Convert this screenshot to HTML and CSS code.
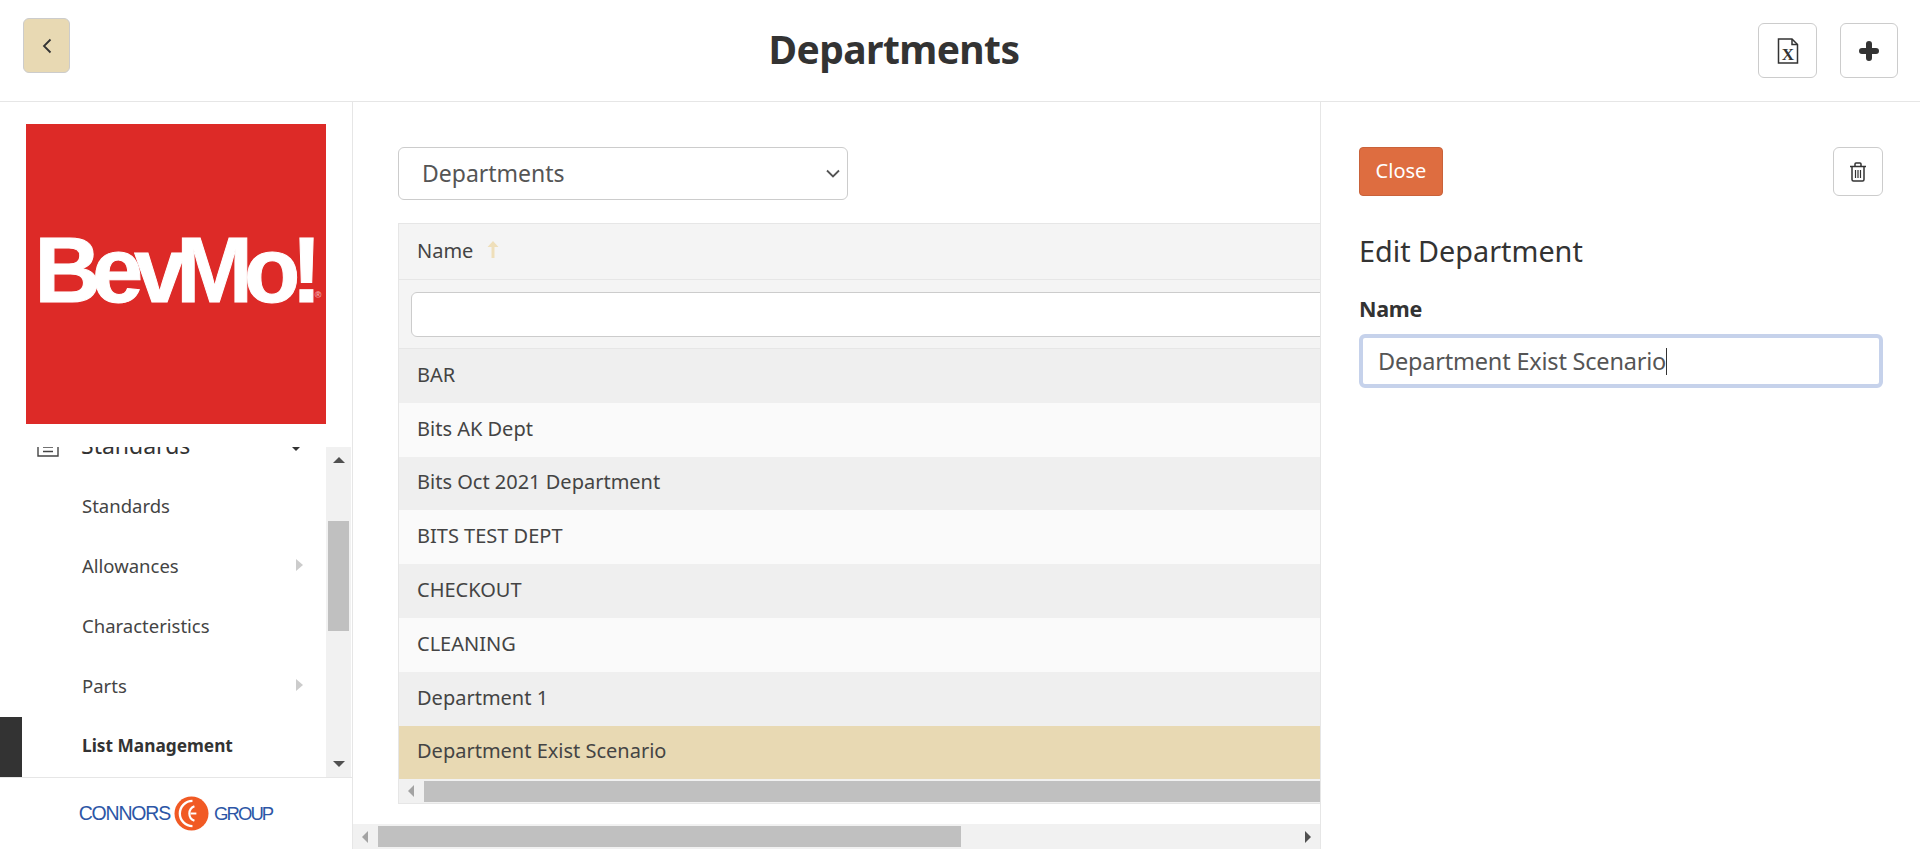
FILE: index.html
```html
<!DOCTYPE html>
<html lang="en">
<head>
    <meta charset="UTF-8">
    <title>Departments</title>
    <link rel="stylesheet" href="styles.css">
</head>
<body>
    <header class="topbar">
        <button class="back-btn" type="button" aria-label="Back">
            <svg width="14" height="16" viewBox="0 0 14 16"><path d="M10.5 1.5 L4 8 L10.5 14.5" fill="none" stroke="#333" stroke-width="1.8"/></svg>
        </button>
        <h1 class="page-title">Departments</h1>
        <div class="top-actions">
            <button class="icon-btn icon-btn-excel" type="button" aria-label="Export">
                <svg width="22" height="26" viewBox="0 0 22 26">
                    <path d="M1.5 1 H15 L20.5 6.5 V25 H1.5 Z" fill="#fff" stroke="#333" stroke-width="1.5"/>
                    <path d="M15 1 V6.5 H20.5" fill="none" stroke="#333" stroke-width="1.5"/>
                    <text x="11" y="22" text-anchor="middle" class="excel-x">X</text>
                </svg>
            </button>
            <button class="icon-btn icon-btn-plus" type="button" aria-label="Add">
                <svg width="20" height="20" viewBox="0 0 20 20"><path d="M10 3 V17 M3 10 H17" stroke="#333" stroke-width="6" stroke-linecap="round"/></svg>
            </button>
        </div>
    </header>

    <div class="layout">
        <aside class="sidebar">
            <div class="brand-logo"><span class="brand-name">BevMo!</span><span class="brand-reg">®</span></div>
            <div class="nav-area">
                <nav class="nav-list">
                    <div class="nav-parent">
                        <svg class="nav-icon" width="22" height="18" viewBox="0 0 22 18"><path d="M1 0 V17 H21 V0 M6 8 H16 M6 12.5 H16" fill="none" stroke="#444" stroke-width="1.4"/></svg>
                        <span>Standards</span>
                        <i class="caret-down"></i>
                    </div>
                    <a class="nav-item">Standards</a>
                    <a class="nav-item">Allowances<i class="caret-right"></i></a>
                    <a class="nav-item">Characteristics</a>
                    <a class="nav-item">Parts<i class="caret-right"></i></a>
                    <a class="nav-item nav-item-active">List Management</a>
                </nav>
                <div class="vscroll">
                    <i class="arrow-up"></i>
                    <div class="vscroll-track"><div class="vscroll-thumb"></div></div>
                    <i class="arrow-down"></i>
                </div>
            </div>
            <div class="sidebar-foot">
                <span class="cg-word">CONNORS</span>
                <svg class="cg-mark" width="35" height="35" viewBox="0 0 36 36">
                    <circle cx="18" cy="18" r="17.5" fill="#f15a24"/>
                    <path d="M19 5 A13 13 0 0 0 19 31" fill="none" stroke="#fff" stroke-width="2.4"/>
                    <path d="M21 10.5 A8 8 0 0 0 21 25.5" fill="none" stroke="#fff" stroke-width="2.2"/>
                    <path d="M17 18 H23" fill="none" stroke="#fff" stroke-width="2"/>
                </svg>
                <span class="cg-word cg-word-group">GROUP</span>
            </div>
        </aside>

        <main class="main">
            <div class="main-body">
                <select class="list-select">
                    <option>Departments</option>
                </select>
                <div class="grid">
                    <div class="grid-head">
                        <span>Name</span>
                        <svg class="sort-arrow" width="12" height="18" viewBox="0 0 12 18"><path d="M6 0 L11.5 6 H7.5 V17 H4.5 V6 H0.5 Z" fill="#efdfba"/></svg>
                    </div>
                    <div class="grid-filter"><div class="filter-input"></div></div>
                    <div class="grid-row row-odd">BAR</div>
                    <div class="grid-row row-even">Bits AK Dept</div>
                    <div class="grid-row row-odd">Bits Oct 2021 Department</div>
                    <div class="grid-row row-even">BITS TEST DEPT</div>
                    <div class="grid-row row-odd">CHECKOUT</div>
                    <div class="grid-row row-even">CLEANING</div>
                    <div class="grid-row row-odd">Department 1</div>
                    <div class="grid-row row-selected">Department Exist Scenario</div>
                    <div class="hscroll hscroll-grid">
                        <i class="arrow-left"></i>
                        <div class="hscroll-thumb hscroll-thumb-grid"></div>
                    </div>
                </div>
            </div>
            <div class="hscroll hscroll-main">
                <i class="arrow-left"></i>
                <div class="hscroll-track"><div class="hscroll-thumb hscroll-thumb-main"></div></div>
                <i class="arrow-right"></i>
            </div>
        </main>

        <section class="panel">
            <div class="panel-top">
                <button class="close-btn" type="button">Close</button>
                <button class="icon-btn icon-btn-trash" type="button" aria-label="Delete">
                    <svg width="18" height="20" viewBox="0 0 18 20">
                        <path d="M1 4.5 H17 M6 4.5 V2 Q6 1 7 1 H11 Q12 1 12 2 V4.5" fill="none" stroke="#333" stroke-width="1.5"/>
                        <path d="M3 4.5 V17.5 Q3 19 4.5 19 H13.5 Q15 19 15 17.5 V4.5" fill="none" stroke="#333" stroke-width="1.5"/>
                        <path d="M6.5 8 V16 M9 8 V16 M11.5 8 V16" fill="none" stroke="#333" stroke-width="1.2"/>
                    </svg>
                </button>
            </div>
            <h2 class="panel-title">Edit Department</h2>
            <div class="field-label">Name</div>
            <div class="field-input" role="textbox">Department Exist Scenario<span class="field-caret"></span></div>
        </section>
    </div>
</body>
</html>
```

FILE: styles.css
```css
* {
    box-sizing: border-box;
}
html, body {
    height: 100%;
}
body {
    margin: 0;
    display: flex;
    flex-direction: column;
    overflow: hidden;
    background-color: #fff;
    color: #333;
    font-family: "Noto Sans", sans-serif;
}
button {
    font-family: inherit;
    cursor: pointer;
}

/* top bar */
.topbar {
    display: flex;
    align-items: flex-start;
    height: 102px;
    flex: none;
    padding: 18px 22px 0 23px;
    border-bottom: 1px solid #e6e6e6;
}
.back-btn {
    display: flex;
    align-items: center;
    justify-content: center;
    width: 47px;
    height: 55px;
    padding: 0;
    background-color: #e8d9b3;
    border: 1px solid #ccc;
    border-radius: 6px;
}
.page-title {
    flex: 1;
    margin: 6px 40px 0 0;
    font-size: 39px;
    line-height: 50px;
    font-weight: 700;
    letter-spacing: -0.6px;
    text-align: center;
}
.top-actions {
    display: flex;
    gap: 23px;
    margin-top: 5px;
}
.icon-btn {
    display: flex;
    align-items: center;
    justify-content: center;
    padding: 0;
    background-color: #fff;
    border: 1px solid #ccc;
    border-radius: 6px;
}
.icon-btn-excel {
    width: 59px;
    height: 55px;
}
.icon-btn-plus {
    width: 58px;
    height: 55px;
}
.icon-btn-trash {
    width: 50px;
    height: 49px;
}
.excel-x {
    font-family: "Liberation Serif", serif;
    font-size: 17px;
    font-weight: 700;
    fill: #333;
}

/* page columns */
.layout {
    display: flex;
    flex: 1;
    min-height: 0;
}
.sidebar {
    display: flex;
    flex-direction: column;
    flex: none;
    width: 353px;
    border-right: 1px solid #e6e6e6;
}
.brand-logo {
    display: flex;
    align-items: flex-start;
    justify-content: center;
    flex: none;
    width: 300px;
    height: 300px;
    margin: 22px 0 23px 26px;
    padding: 93px 4px 0 0;
    background-color: #dd2a27;
    color: #fff;
    font-family: "Liberation Sans", sans-serif;
    font-weight: 700;
}
.brand-name {
    font-size: 92px;
    line-height: 106px;
    letter-spacing: -9px;
    -webkit-text-stroke: 1px #fff;
}
.brand-reg {
    margin: 72px -8px 0 2px;
    font-size: 9px;
    line-height: 12px;
    opacity: 0.6;
}

/* side menu */
.nav-area {
    display: flex;
    flex: 1;
    min-height: 0;
    padding-right: 1px;
    border-bottom: 1px solid #e6e6e6;
}
.nav-list {
    flex: 1;
    overflow: hidden;
}
.nav-parent {
    display: flex;
    align-items: center;
    height: 60px;
    margin-top: -32px;
    padding-left: 37px;
    font-size: 23px;
    color: #333;
}
.nav-parent span {
    margin-left: 22px;
}
.nav-icon {
    margin-top: 6px;
}
.nav-item {
    position: relative;
    display: flex;
    align-items: center;
    justify-content: space-between;
    height: 60px;
    padding: 0 23px 0 82px;
    font-size: 18.5px;
    color: #444;
}
.nav-item-active {
    font-size: 17.3px;
    font-weight: 700;
    color: #333;
}
.nav-item-active::before {
    content: "";
    position: absolute;
    left: 0;
    top: 2px;
    width: 22px;
    height: 60px;
    background-color: #333;
}
.caret-down {
    width: 0;
    height: 0;
    margin: 7px 26px 0 auto;
    border-left: 4px solid transparent;
    border-right: 4px solid transparent;
    border-top: 4px solid #333;
}
.caret-right {
    width: 0;
    height: 0;
    border-top: 6px solid transparent;
    border-bottom: 6px solid transparent;
    border-left: 7px solid #ccc;
}

/* scrollbars */
.vscroll {
    display: flex;
    flex-direction: column;
    align-items: center;
    flex: none;
    width: 25px;
    background-color: #f1f1f1;
}
.vscroll-track {
    flex: 1;
    width: 100%;
    padding: 58px 2px 0;
}
.vscroll-thumb {
    height: 110px;
    background-color: #c0c0c0;
}
.arrow-up, .arrow-down {
    flex: none;
    width: 0;
    height: 0;
    border-left: 6px solid transparent;
    border-right: 6px solid transparent;
}
.arrow-up {
    margin-top: 10px;
    border-bottom: 6px solid #505050;
}
.arrow-down {
    margin-bottom: 10px;
    border-top: 6px solid #505050;
}
.hscroll {
    display: flex;
    align-items: center;
    background-color: #f1f1f1;
}
.arrow-left, .arrow-right {
    flex: none;
    width: 0;
    height: 0;
    border-top: 6px solid transparent;
    border-bottom: 6px solid transparent;
}
.arrow-left {
    border-right: 6px solid #a3a3a3;
}
.arrow-right {
    border-left: 6px solid #505050;
}
.hscroll-thumb {
    height: 21px;
    background-color: #c0c0c0;
}

/* footer logo */
.sidebar-foot {
    display: flex;
    align-items: center;
    justify-content: center;
    flex: none;
    height: 71px;
    padding-right: 1px;
}
.cg-word {
    font-family: "Liberation Sans", sans-serif;
    font-size: 19.5px;
    letter-spacing: -1.2px;
    color: #2c56a6;
}
.cg-word-group {
    font-size: 18.5px;
    letter-spacing: -1.9px;
}
.cg-mark {
    margin: 0 5px 0 4px;
}

/* main column */
.main {
    display: flex;
    flex-direction: column;
    flex: 1;
    min-width: 0;
    overflow: hidden;
}
.main-body {
    flex: 1;
    min-height: 0;
    overflow: hidden;
    padding: 45px 0 0 45px;
}
.list-select {
    display: block;
    width: 450px;
    height: 53px;
    padding: 0 0 2px 23px;
    font-family: inherit;
    font-size: 23px;
    color: #555;
    background-color: #fff;
    background-image: url("data:image/svg+xml,%3Csvg xmlns='http://www.w3.org/2000/svg' width='14' height='9'%3E%3Cpath d='M1 1.5 L7 7.5 L13 1.5' fill='none' stroke='%23555' stroke-width='1.8'/%3E%3C/svg%3E");
    background-repeat: no-repeat;
    background-position: right 7px center;
    border: 1px solid #ccc;
    border-radius: 6px;
    appearance: none;
}
.grid {
    margin: 23px -20px 0 0;
    border-top: 1px solid #e6e6e6;
    border-left: 1px solid #e6e6e6;
    border-bottom: 1px solid #e6e6e6;
    font-size: 20px;
    color: #444;
}
.grid-head {
    display: flex;
    align-items: center;
    height: 56px;
    padding: 0 0 3px 18px;
    background-color: #f4f4f4;
    border-bottom: 1px solid #e6e6e6;
}
.sort-arrow {
    margin: 0 0 1px 14px;
}
.grid-filter {
    height: 69px;
    padding: 12px 0 0 12px;
    background-color: #f4f4f4;
    border-bottom: 1px solid #e6e6e6;
}
.filter-input {
    height: 45px;
    background-color: #fff;
    border: 1px solid #ccc;
    border-radius: 6px;
}
.grid-row {
    display: flex;
    align-items: center;
    height: 53.8px;
    padding: 0 0 3px 18px;
}
.row-odd {
    background-color: #efefef;
}
.row-even {
    background-color: #fafafa;
}
.row-selected {
    background-color: #e8d9b3;
}
.hscroll-grid {
    height: 24px;
    padding-left: 9px;
}
.hscroll-thumb-grid {
    flex: 1;
    margin-left: 10px;
}
.hscroll-main {
    flex: none;
    height: 25px;
    padding: 0 9px;
}
.hscroll-track {
    flex: 1;
    padding: 0 10px;
}
.hscroll-thumb-main {
    width: 583px;
}

/* edit panel */
.panel {
    position: relative;
    flex: none;
    width: 600px;
    padding: 45px 37px 0 38px;
    background-color: #fff;
    border-left: 1px solid #e6e6e6;
}
.panel-top {
    display: flex;
    justify-content: space-between;
}
.close-btn {
    width: 84px;
    height: 49px;
    padding: 0 0 2px;
    font-size: 20px;
    color: #fff;
    background-color: #de6d40;
    border: 1px solid #c9623a;
    border-radius: 4px;
}
.panel-title {
    margin: 35px 0 0;
    font-size: 28.8px;
    line-height: 40px;
    font-weight: 400;
}
.field-label {
    margin-top: 24px;
    font-size: 21.5px;
    line-height: 28px;
    font-weight: 700;
    letter-spacing: -0.3px;
}
.field-input {
    display: flex;
    align-items: center;
    height: 54px;
    margin-top: 11px;
    padding: 0 15px;
    font-size: 23.5px;
    letter-spacing: -0.2px;
    color: #555;
    background-color: #fff;
    border: 4px solid #c6d2eb;
    border-radius: 6px;
}
.field-caret {
    width: 1px;
    height: 27px;
    background-color: #333;
}
```
